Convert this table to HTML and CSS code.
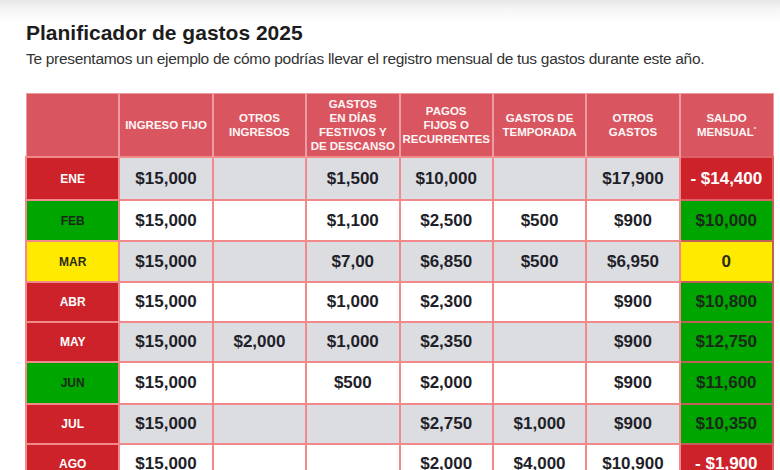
FILE: index.html
```html
<!DOCTYPE html>
<html lang="es">
<head>
<meta charset="utf-8">
<title>Planificador de gastos 2025</title>
<link rel="stylesheet" href="styles.css">
</head>
<body>
<div class="page">
  <h1 class="title">Planificador de gastos 2025</h1>
  <p class="subtitle">Te presentamos un ejemplo de cómo podrías llevar el registro mensual de tus gastos durante este año.</p>
  <table class="planner">
    <thead>
      <tr>
        <th></th>
        <th>Ingreso fijo</th>
        <th>Otros<br>ingresos</th>
        <th>Gastos<br>en días<br>festivos y<br>de descanso</th>
        <th>Pagos<br>fijos o<br>recurrentes</th>
        <th>Gastos de<br>temporada</th>
        <th>Otros<br>gastos</th>
        <th>Saldo<br>mensual<sup>*</sup></th>
      </tr>
    </thead>
    <tbody>
      <tr class="grey r1">
        <td class="m red">ENE</td><td>$15,000</td><td></td><td>$1,500</td><td>$10,000</td><td></td><td>$17,900</td><td class="s red">- $14,400</td>
      </tr>
      <tr class="r2">
        <td class="m green">FEB</td><td>$15,000</td><td></td><td>$1,100</td><td>$2,500</td><td>$500</td><td>$900</td><td class="s green">$10,000</td>
      </tr>
      <tr class="grey r3">
        <td class="m yellow">MAR</td><td>$15,000</td><td></td><td>$7,00</td><td>$6,850</td><td>$500</td><td>$6,950</td><td class="s yellow">0</td>
      </tr>
      <tr class="r4">
        <td class="m red">ABR</td><td>$15,000</td><td></td><td>$1,000</td><td>$2,300</td><td></td><td>$900</td><td class="s green">$10,800</td>
      </tr>
      <tr class="grey r5">
        <td class="m red">MAY</td><td>$15,000</td><td>$2,000</td><td>$1,000</td><td>$2,350</td><td></td><td>$900</td><td class="s green">$12,750</td>
      </tr>
      <tr class="r6">
        <td class="m green">JUN</td><td>$15,000</td><td></td><td>$500</td><td>$2,000</td><td></td><td>$900</td><td class="s green">$11,600</td>
      </tr>
      <tr class="grey r7">
        <td class="m red">JUL</td><td>$15,000</td><td></td><td></td><td>$2,750</td><td>$1,000</td><td>$900</td><td class="s green">$10,350</td>
      </tr>
      <tr class="r8">
        <td class="m red">AGO</td><td>$15,000</td><td></td><td></td><td>$2,000</td><td>$4,000</td><td>$10,900</td><td class="s red">- $1,900</td>
      </tr>
    </tbody>
  </table>
</div>
</body>
</html>
```

FILE: styles.css
```css
html, body {
  margin: 0;
  padding: 0;
  background: #ffffff;
}
body {
  font-family: "Liberation Sans", Arial, sans-serif;
  color: #222222;
  overflow: hidden;
  height: 470px;
  background: linear-gradient(to bottom, #e6e6e6 0px, #f6f6f6 10px, #ffffff 22px);
}
.page {
  padding: 20px 0 0 25px;
}
.title {
  margin: 0 0 0 1px;
  font-size: 21px;
  line-height: 25px;
  font-weight: bold;
  color: #1c1c1c;
}
.subtitle {
  margin: 4px 0 0 1px;
  font-size: 15.5px;
  line-height: 20px;
  color: #333333;
  letter-spacing: -0.3px;
}
.planner {
  margin-top: 24px;
  width: 749px;
  table-layout: fixed;
  border-collapse: collapse;
  border: 1px solid #f19a9e;
}
.planner th {
  background: #d9555f;
  color: #fff6f6;
  font-size: 11.5px;
  line-height: 14px;
  font-weight: bold;
  text-transform: uppercase;
  height: 62px;
  padding: 0 2px;
  border-left: 2px solid #ec9ca2;
  border-top: 1px solid #f19a9e;
  vertical-align: middle;
}
.planner th:first-child {
  border-left: 1px solid #f19a9e;
}
.planner th sup {
  font-size: 6px;
  vertical-align: top;
  line-height: 8px;
}
.planner td {
  text-align: center;
  font-size: 17px;
  font-weight: bold;
  color: #1f1f2a;
  border: 2px solid #f28a8c;
  padding: 0;
  background: #ffffff;
}
.planner tr.grey td {
  background: #dcdde0;
}
.planner tr.r1 td { height: 41px; }
.planner tr.r2 td { height: 39px; }
.planner tr.r3 td { height: 39px; }
.planner tr.r4 td { height: 38px; }
.planner tr.r5 td { height: 38px; }
.planner tr.r6 td { height: 40px; }
.planner tr.r7 td { height: 38px; }
.planner tr.r8 td { height: 38px; }
.planner td.m {
  font-size: 12px;
  color: #ffffff;
}
.planner td.red,
.planner tr.grey td.red {
  background: #cd2229;
  color: #ffffff;
}
.planner td.green,
.planner tr.grey td.green {
  background: #00a500;
  color: #1a2a1a;
}
.planner td.yellow,
.planner tr.grey td.yellow {
  background: #ffea00;
  color: #2a2a1a;
}
.planner td.s {
  border-color: #c0605a;
}
.planner td.s.red {
  border-color: #e06068;
}
```
